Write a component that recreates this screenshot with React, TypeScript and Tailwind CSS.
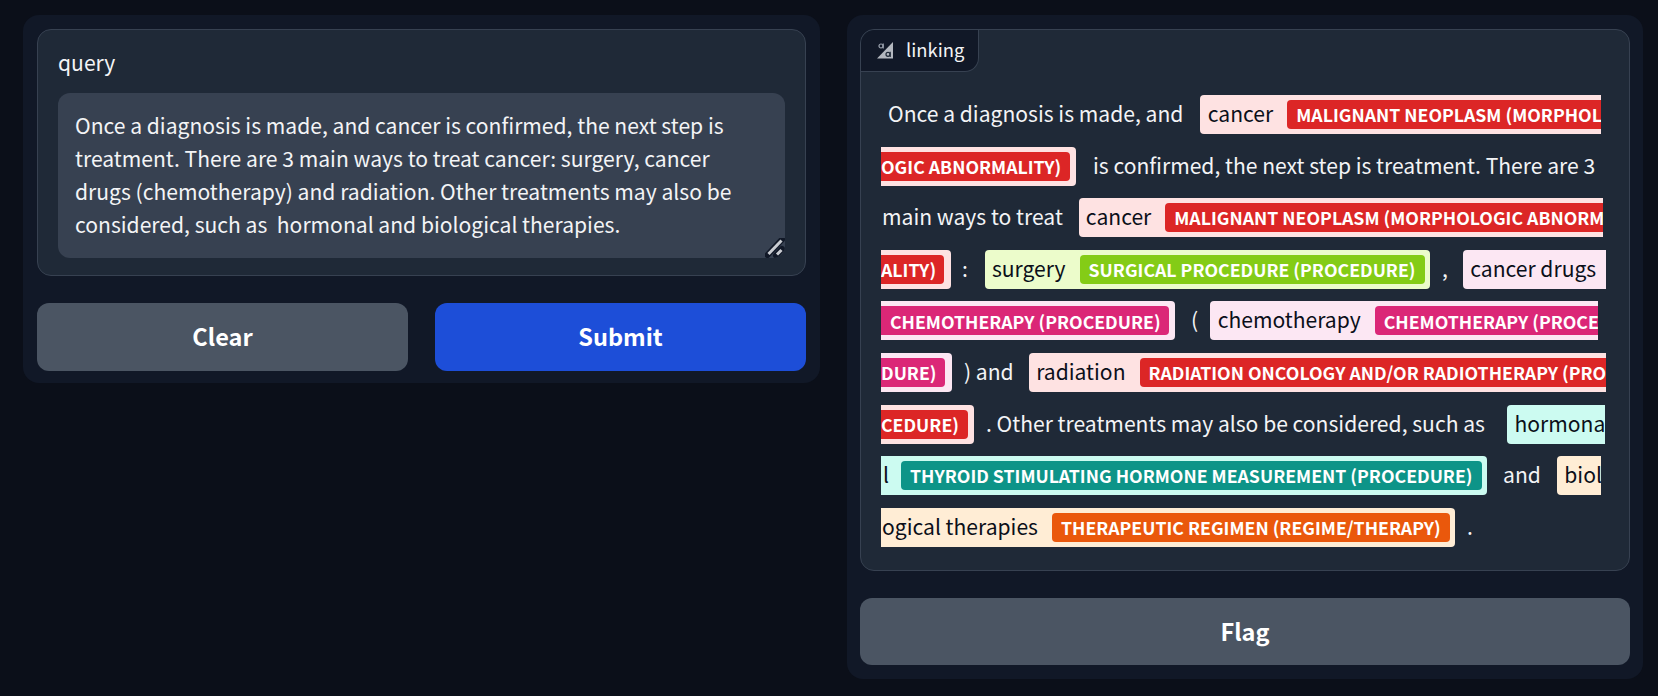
type Tone = "red" | "pink" | "lime" | "teal" | "orange";

const pillBg: Record<Tone, string> = {
  red: "bg-[#fee2e2]",
  pink: "bg-[#fce7f3]",
  lime: "bg-[#ecfccb]",
  teal: "bg-[#ccfbf1]",
  orange: "bg-[#ffedd5]",
};
const labelBg: Record<Tone, string> = {
  red: "bg-[#dc2626]",
  pink: "bg-[#db2777]",
  lime: "bg-[#84cc16]",
  teal: "bg-[#0d9488]",
  orange: "bg-[#ea580c]",
};

function Plain({ text, className = "" }: { text: string; className?: string }) {
  return <span className={`flex-none whitespace-pre pb-[3px] text-[21.1px] leading-[30px] text-[#f3f4f6] ${className}`}>{text}</span>;
}

function Pill({
  tone,
  text,
  label,
  width,
  className = "",
  textClass = "pl-[7.5px]",
  labelClass = "ml-[14px]",
  openStart = false,
  openEnd = false,
}: {
  tone: Tone;
  text?: string;
  label?: string;
  width: string;
  className?: string;
  textClass?: string;
  labelClass?: string;
  openStart?: boolean;
  openEnd?: boolean;
}) {
  return (
    <div
      className={`flex h-[39px] flex-none items-center overflow-hidden ${pillBg[tone]} ${width} ${openStart ? "" : "rounded-l-[4px]"} ${openEnd ? "" : "rounded-r-[4px]"} ${className}`}
    >
      {text && <span className={`flex-none whitespace-pre pb-[3px] text-[21.1px] leading-[30px] text-[#0b0f19] ${textClass}`}>{text}</span>}
      {label && (
        <span
          className={`flex h-[29px] flex-none items-center whitespace-pre px-[9px] text-[17.7px] font-bold text-white ${labelBg[tone]} ${labelClass} ${openStart && !text ? "" : "rounded-l-[4px]"} ${openEnd ? "" : "rounded-r-[4px]"}`}
        >
          {label}
        </span>
      )}
    </div>
  );
}

function Row({ children }: { children: React.ReactNode }) {
  return <div className="flex h-[39px] items-center">{children}</div>;
}

function HighlightIcon() {
  return (
    <svg viewBox="0 0 16 18" className="h-[18px] w-[16px] flex-none">
      <polygon points="0,17.5 16,1 16,17.5" fill="#b4b8bf" />
      <circle cx="4" cy="5" r="2" fill="none" stroke="#9ca3af" strokeWidth="1.2" />
      <path d="M6.2 2.4V7.6" stroke="#9ca3af" strokeWidth="1.2" />
      <circle cx="11" cy="13.3" r="2" fill="none" stroke="#1f2937" strokeWidth="1.2" />
      <path d="M13.2 10.7V15.9" stroke="#1f2937" strokeWidth="1.2" />
    </svg>
  );
}

function ResizeGrip() {
  return (
    <svg viewBox="0 0 20 20" className="pointer-events-none absolute bottom-0 right-0 h-[20px] w-[20px]">
      <path d="M2.5 17L17 1.5" stroke="#111827" strokeWidth="6" strokeLinecap="round" />
      <path d="M11 17.5L17 11" stroke="#111827" strokeWidth="6" strokeLinecap="round" />
      <path d="M3.5 16L16.5 2.5" stroke="#c9ccd1" strokeWidth="3" />
      <path d="M12 16.5L16.5 12" stroke="#c9ccd1" strokeWidth="3" />
    </svg>
  );
}

export default function App() {
  const query =
    "Once a diagnosis is made, and cancer is confirmed, the next step is treatment. There are 3 main ways to treat cancer: surgery, cancer drugs (chemotherapy) and radiation. Other treatments may also be considered, such as  hormonal and biological therapies.";

  return (
    <div className="flex min-h-[696px] items-start gap-[27px] bg-[#0b0f19] pl-[23px] pr-[15px] pt-[15px] font-['Noto_Sans_CJK_SC',sans-serif]">
      <div className="flex w-[797px] flex-col gap-[27px] rounded-[16px] bg-[#111827] px-[14px] pb-[12px] pt-[14px]">
        <div className="flex h-[247px] flex-col rounded-[14px] border border-[#374151] bg-[#1f2937] px-[20px] pt-[16px]">
          <label className="h-[47px] text-[21.1px] leading-[32px] text-[#f3f4f6]">query</label>
          <div className="relative h-[165px] overflow-hidden rounded-[12px]">
            <textarea
              readOnly
              value={query}
              className="h-full w-full resize-none bg-[#374151] pb-[15px] pl-[17px] pr-[30px] pt-[16px] text-[21.1px] leading-[33px] text-[#f3f4f6] outline-none"
            />
            <ResizeGrip />
          </div>
        </div>
        <div className="grid grid-cols-2 gap-[27px]">
          <button className="h-[68px] rounded-[12px] bg-[#4b5563] text-[23.5px] font-bold text-white">Clear</button>
          <button className="h-[68px] rounded-[12px] bg-[#1d4ed8] text-[23.5px] font-bold text-white">Submit</button>
        </div>
      </div>

      <div className="flex w-[796px] flex-col gap-[27px] rounded-[16px] bg-[#111827] px-[13px] pb-[14px] pt-[14px]">
        <div className="flex h-[542px] flex-col rounded-[14px] border border-[#374151] bg-[#1f2937]">
          <div className="flex h-[42px] w-[118px] items-center gap-[13px] rounded-br-[14px] rounded-tl-[14px] border-b border-r border-[#374151] bg-[#111827] pb-[2px] pl-[16px] text-[18.4px] text-[#f3f4f6]">
            <HighlightIcon />
            <span>linking</span>
          </div>
          <div className="flex flex-col gap-[12.6px] pl-[20px] pt-[23px]">
            <Row>
              <Plain text="Once a diagnosis is made, and" className="ml-[7px]" />
              <Pill tone="red" text="cancer" label="MALIGNANT NEOPLASM (MORPHOLOGIC ABNORMALITY)" width="w-[401px]" className="ml-[17px]" openEnd />
            </Row>
            <Row>
              <Pill tone="red" label="OGIC ABNORMALITY)" width="w-[195px]" labelClass="!pl-0 w-[189px]" openStart />
              <Plain text="is confirmed, the next step is treatment. There are 3" className="ml-[17px]" />
            </Row>
            <Row>
              <Plain text="main ways to treat" className="ml-[1px]" />
              <Pill tone="red" text="cancer" label="MALIGNANT NEOPLASM (MORPHOLOGIC ABNORMALITY)" width="w-[524px]" className="ml-[16px]" textClass="pl-[7px]" openEnd />
            </Row>
            <Row>
              <Pill tone="red" label="ALITY)" width="w-[70px]" labelClass="!pl-0 w-[63px]" openStart />
              <Plain text=":" className="ml-[11px]" />
              <Pill tone="lime" text="surgery" label="SURGICAL PROCEDURE (PROCEDURE)" width="w-[445px]" className="ml-[17px]" textClass="pl-[7px]" />
              <Plain text="," className="ml-[12px]" />
              <Pill tone="pink" text="cancer drugs" width="w-[143px]" className="ml-[15px]" openEnd />
            </Row>
            <Row>
              <Pill tone="pink" label="CHEMOTHERAPY (PROCEDURE)" width="w-[294px]" labelClass="ml-0 w-[288px]" openStart />
              <Plain text="(" className="ml-[16px]" />
              <Pill tone="pink" text="chemotherapy" label="CHEMOTHERAPY (PROCEDURE)" width="w-[388px]" className="ml-[12px]" openEnd />
            </Row>
            <Row>
              <Pill tone="pink" label="DURE)" width="w-[71px]" labelClass="!pl-0 w-[64px]" openStart />
              <Plain text=") and" className="ml-[12px]" />
              <Pill tone="red" text="radiation" label="RADIATION ONCOLOGY AND/OR RADIOTHERAPY (PROCEDURE)" width="w-[577px]" className="ml-[15px]" openEnd />
            </Row>
            <Row>
              <Pill tone="red" label="CEDURE)" width="w-[93px]" labelClass="!pl-0 w-[87px]" openStart />
              <Plain text=". Other treatments may also be considered, such as" className="ml-[12px]" />
              <Pill tone="teal" text="hormonal" width="w-[98px]" className="ml-[22px]" openEnd />
            </Row>
            <Row>
              <Pill tone="teal" text="l" label="THYROID STIMULATING HORMONE MEASUREMENT (PROCEDURE)" width="w-[606px]" textClass="pl-[2px]" labelClass="ml-[12px]" openStart />
              <Plain text="and" className="ml-[16px]" />
              <Pill tone="orange" text="biological therapies" width="w-[44px]" className="ml-[16px]" openEnd />
            </Row>
            <Row>
              <Pill tone="orange" text="ogical therapies" label="THERAPEUTIC REGIMEN (REGIME/THERAPY)" width="w-[574px]" textClass="pl-[1px]" openStart />
              <Plain text="." className="ml-[12px]" />
            </Row>
          </div>
        </div>
        <button className="h-[67px] rounded-[12px] bg-[#4b5563] text-[23.5px] font-bold text-white">Flag</button>
      </div>
    </div>
  );
}
